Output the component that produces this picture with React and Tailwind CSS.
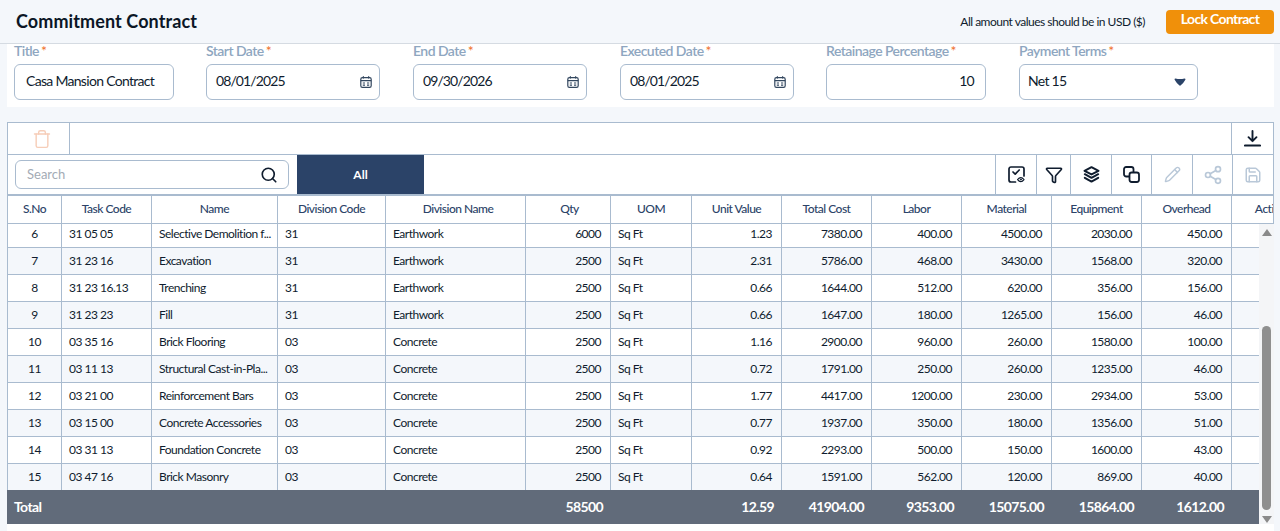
import React from "react";
import { Trash, Search, Funnel, Pencil, Share2, Save } from "lucide-react";

const cols = "grid grid-cols-[54px_90px_126px_108px_140px_85px_81px_90px_90px_90px_90px_90px_90px_82px]";
const heads = ["S.No","Task Code","Name","Division Code","Division Name","Qty","UOM","Unit Value","Total Cost","Labor","Material","Equipment","Overhead","Actions"];
const rows = [
["6","31 05 05","Selective Demolition f...","31","Earthwork","6000","Sq Ft","1.23","7380.00","400.00","4500.00","2030.00","450.00"],
["7","31 23 16","Excavation","31","Earthwork","2500","Sq Ft","2.31","5786.00","468.00","3430.00","1568.00","320.00"],
["8","31 23 16.13","Trenching","31","Earthwork","2500","Sq Ft","0.66","1644.00","512.00","620.00","356.00","156.00"],
["9","31 23 23","Fill","31","Earthwork","2500","Sq Ft","0.66","1647.00","180.00","1265.00","156.00","46.00"],
["10","03 35 16","Brick Flooring","03","Concrete","2500","Sq Ft","1.16","2900.00","960.00","260.00","1580.00","100.00"],
["11","03 11 13","Structural Cast-in-Pla...","03","Concrete","2500","Sq Ft","0.72","1791.00","250.00","260.00","1235.00","46.00"],
["12","03 21 00","Reinforcement Bars","03","Concrete","2500","Sq Ft","1.77","4417.00","1200.00","230.00","2934.00","53.00"],
["13","03 15 00","Concrete Accessories","03","Concrete","2500","Sq Ft","0.77","1937.00","350.00","180.00","1356.00","51.00"],
["14","03 31 13","Foundation Concrete","03","Concrete","2500","Sq Ft","0.92","2293.00","500.00","150.00","1600.00","43.00"],
["15","03 47 16","Brick Masonry","03","Concrete","2500","Sq Ft","0.64","1591.00","562.00","120.00","869.00","40.00"],
];
const align = (i) => i === 0 ? "justify-center" : [5,7,8,9,10,11,12].includes(i) ? "justify-end pr-[9px]" : "justify-start pl-[7px]";
const headPad = (i) => i === 4 ? "pl-[5px]" : i === 5 ? "pl-[3px]" : "";

function Label({ children }) {
  return <div className="text-[14px] leading-[14px] font-semibold tracking-[-0.55px] text-[#8ea6c0] whitespace-nowrap h-[14px]">{children}<span className="text-[#f0702c] font-normal ml-[2px]">*</span></div>;
}
function Field({ label, width, children, className = "" }) {
  return (
    <div className={`flex flex-col ${width}`}>
      <Label>{label}</Label>
      <div className={`mt-[6px] h-[36px] border border-[#a9bbcf] rounded-[6px] flex items-center text-[14px] tracking-[-0.7px] text-[#0f1c2e] bg-white ${className}`}>{children}</div>
    </div>
  );
}
function Cal() {
  return (
    <svg width="12" height="12" viewBox="0 0 12 12" fill="none" stroke="#33475f" strokeWidth="1.2">
      <rect x="0.8" y="1.6" width="10.4" height="9.8" rx="1.6" />
      <path d="M0.8 4.6H11.2M3.4 0.2V2.6M8.6 0.2V2.6M2.8 7H5M7 7H9.2M2.8 9.2H5M7 9.2H9.2" />
    </svg>
  );
}
function DateField({ label, value, width }) {
  return (
    <Field label={label} width={width} className="pl-[9px] pr-[7px] justify-between">
      <span className="pb-[3px] tracking-[-0.9px]">{value}</span>
      <Cal />
    </Field>
  );
}
function ToolBtn({ w, children }) {
  return <div className={`${w} h-full flex items-center justify-center border-l border-[#a9bbcf]`}>{children}</div>;
}
function ViewCheck() {
  return (
    <svg width="17" height="17" viewBox="0 0 17 17" fill="none" stroke="#0f1c2e" strokeWidth="1.7" strokeLinecap="round" strokeLinejoin="round">
      <path d="M7.5 16H3a2 2 0 0 1-2-2V3a2 2 0 0 1 2-2h11a2 2 0 0 1 2 2v7" />
      <path d="M5 6l2.2 2.2 4-4.2" />
      <path d="M9.6 13.6c1-1.3 2.1-2 3.2-2s2.2.7 3.2 2c-1 1.3-2.1 2-3.2 2s-2.2-.7-3.2-2z" strokeWidth="1.2" />
      <circle cx="12.8" cy="13.6" r=".5" fill="#0f1c2e" strokeWidth="0.8" />
    </svg>
  );
}
function Dup() {
  return (
    <svg width="17" height="17" viewBox="0 0 17 17" fill="none" stroke="#0f1c2e" strokeWidth="1.8">
      <rect x="1" y="1" width="9.5" height="9.5" rx="2.2" />
      <rect x="6.5" y="6.5" width="9.5" height="9.5" rx="2.2" fill="#fff" />
    </svg>
  );
}
function Stack() {
  return (
    <svg width="17" height="17" viewBox="0 0 17 17" fill="none" stroke="#0f1c2e" strokeWidth="2" strokeLinejoin="round" strokeLinecap="round">
      <path d="M8.5 1.2L15.5 4.8L8.5 8.4L1.5 4.8Z" />
      <path d="M1.8 8.2L8.5 11.8L15.2 8.2" />
      <path d="M1.8 11.8L8.5 15.6L15.2 11.8" />
    </svg>
  );
}
function Down() {
  return (
    <svg width="17" height="17" viewBox="0 0 17 17" fill="none" stroke="#0f1c2e" strokeWidth="1.9" strokeLinecap="round" strokeLinejoin="round">
      <path d="M8.5 1V11M4.5 7.2L8.5 11.2L12.5 7.2" />
      <path d="M1 15.5H16" strokeWidth="2.2" />
    </svg>
  );
}

export default function App() {
  return (
    <div className="w-[1280px] h-[531px] overflow-hidden bg-[#f4f7fb] font-['Lato','Open_Sans',sans-serif] text-[#0f1c2e]">
      <header className="h-[44px] border-b border-[#d5dbe2] flex items-center pl-4 pr-[6px]">
        <h1 className="text-[18px] font-bold tracking-[0.1px] text-[#0b1626]">Commitment Contract</h1>
        <span className="ml-auto text-[12px] tracking-[-0.5px] text-[#0f1c2e]">All amount values should be in USD ($)</span>
        <button className="ml-[21px] w-[108px] h-[24px] bg-[#f0900a] rounded-[4px] text-white text-[14px] tracking-[-0.65px] font-bold leading-[18px] pb-[6px]">Lock Contract</button>
      </header>

      <section className="ml-[7px] mr-[6px] h-[63px] bg-white flex pl-[7px]">
        <Field label="Title" width="w-[160px] mr-[32px]" className="pl-[11px]"><span className="pb-[3px]">Casa Mansion Contract</span></Field>
        <DateField label="Start Date" value="08/01/2025" width="w-[174px] mr-[33px]" />
        <DateField label="End Date" value="09/30/2026" width="w-[174px] mr-[33px]" />
        <DateField label="Executed Date" value="08/01/2025" width="w-[174px] mr-[32px]" />
        <Field label="Retainage Percentage" width="w-[160px] mr-[33px]" className="justify-end pr-[11px]"><span className="pb-[3px]">10</span></Field>
        <Field label="Payment Terms" width="w-[179px]" className="pl-2 pr-[11px] justify-between">
          <span className="pb-[3px]">Net 15</span>
          <svg width="12" height="8" viewBox="0 0 12 8"><path d="M0.5 1.5Q0.5 0.5 1.5 0.5Q6 1.5 10.5 0.5Q11.5 0.5 11.5 1.5Q9 6 6.5 7.5Q6 7.8 5.5 7.5Q3 6 0.5 1.5Z" fill="#2b4368" /></svg>
        </Field>
      </section>

      <section className="ml-[7px] mr-[6px] mt-[15px] h-[33px] bg-white border border-[#a9bbcf] flex">
        <div className="w-[62px] border-r border-[#a9bbcf] flex items-center justify-center pl-[7px]">
          <Trash size={20} strokeWidth={1.7} className="text-[#f6cdb8]" />
        </div>
        <div className="ml-auto w-[42px] border-l border-[#a9bbcf] flex items-center justify-center">
          <Down />
        </div>
      </section>

      <section className="ml-[7px] mr-[6px] -mt-px h-[42px] bg-white border border-[#a9bbcf] border-b-2 flex items-stretch">
        <div className="ml-[7px] mt-[5px] w-[274px] h-[29px] border border-[#a9bbcf] rounded-[6px] flex items-center pl-[11px] pr-[10px] justify-between">
          <span className="text-[13px] text-[#a3abb5]">Search</span>
          <Search size={18} strokeWidth={2.2} className="text-[#0f1c2e]" />
        </div>
        <div className="ml-[8px] w-[127px] bg-[#2b4368] flex items-center justify-center text-white text-[12px] font-bold">All</div>
        <div className="ml-auto flex h-full">
          <ToolBtn w="w-[41px]"><ViewCheck /></ToolBtn>
          <ToolBtn w="w-[34px]"><Funnel size={18} strokeWidth={2.2} className="text-[#0f1c2e]" /></ToolBtn>
          <ToolBtn w="w-[41px]"><Stack /></ToolBtn>
          <ToolBtn w="w-[40px]"><Dup /></ToolBtn>
          <ToolBtn w="w-[41px]"><Pencil size={17} strokeWidth={2} className="text-[#b9c8d8]" /></ToolBtn>
          <ToolBtn w="w-[40px]"><Share2 size={20} strokeWidth={2} className="text-[#b9c8d8]" /></ToolBtn>
          <ToolBtn w="w-[41px]"><Save size={18} strokeWidth={2} className="text-[#b9c8d8]" /></ToolBtn>
        </div>
      </section>

      <section className="ml-[7px] mr-[6px] h-[335px] bg-white flex flex-col relative overflow-hidden">
        <div className="overflow-hidden h-[28px] border-r border-[#a9bbcf] border-l shrink-0">
          <div className={`${cols} w-[1322px] h-[28px] border-b border-[#a9bbcf]`}>
            {heads.map((h, i) => (
              <div key={h} className={`flex items-center justify-center pb-[2px] text-[12px] tracking-[-0.5px] font-medium text-[#2b4368] whitespace-nowrap ${headPad(i)} ${i < 13 ? "border-r border-[#a9bbcf]" : ""}`}>{h}</div>
            ))}
          </div>
        </div>
        <div className="h-[266px] overflow-hidden shrink-0 w-[1252px] border-l border-[#a9bbcf]">
          <div className="-mt-[3px]">
            {rows.map((r, n) => (
              <div key={r[0]} className={`${cols} w-[1322px] h-[27px] border-b border-[#a9bbcf] ${n % 2 ? "bg-[#f4f7fb]" : "bg-white"}`}>
                {[...r, ""].map((c, i) => (
                  <div key={i} className={`flex items-center text-[12px] tracking-[-0.5px] whitespace-nowrap overflow-hidden border-r border-[#a9bbcf] ${align(i)}`}>{c}</div>
                ))}
              </div>
            ))}
          </div>
        </div>
        <div className="h-[34px] w-[1252px] bg-[#616b7a] text-white font-bold text-[14px] tracking-[-0.6px] shrink-0 flex items-center pb-[2px]">
          <div className={`${cols} w-[1322px]`}>
            <div className="col-span-5 pl-[7px]">Total</div>
            {["58500","","12.59","41904.00","9353.00","15075.00","15864.00","1612.00"].map((t, i) => (
              <div key={i} className="text-right pr-[7px]">{t}</div>
            ))}
          </div>
        </div>
        <div className="absolute right-0 top-[28px] w-[15px] h-[300px] bg-[#f4f5f7] flex flex-col items-center">
          <svg width="10" height="7" viewBox="0 0 10 7" className="mt-[5px]"><path d="M5 0L10 7H0Z" fill="#8a8a8a" /></svg>
          <div className="mt-[90px] w-[9px] h-[184px] rounded-full bg-[#8f8f8f]" />
          <svg width="10" height="7" viewBox="0 0 10 7" className="mt-[6px]"><path d="M5 7L0 0H10Z" fill="#8a8a8a" /></svg>
        </div>
      </section>
    </div>
  );
}
